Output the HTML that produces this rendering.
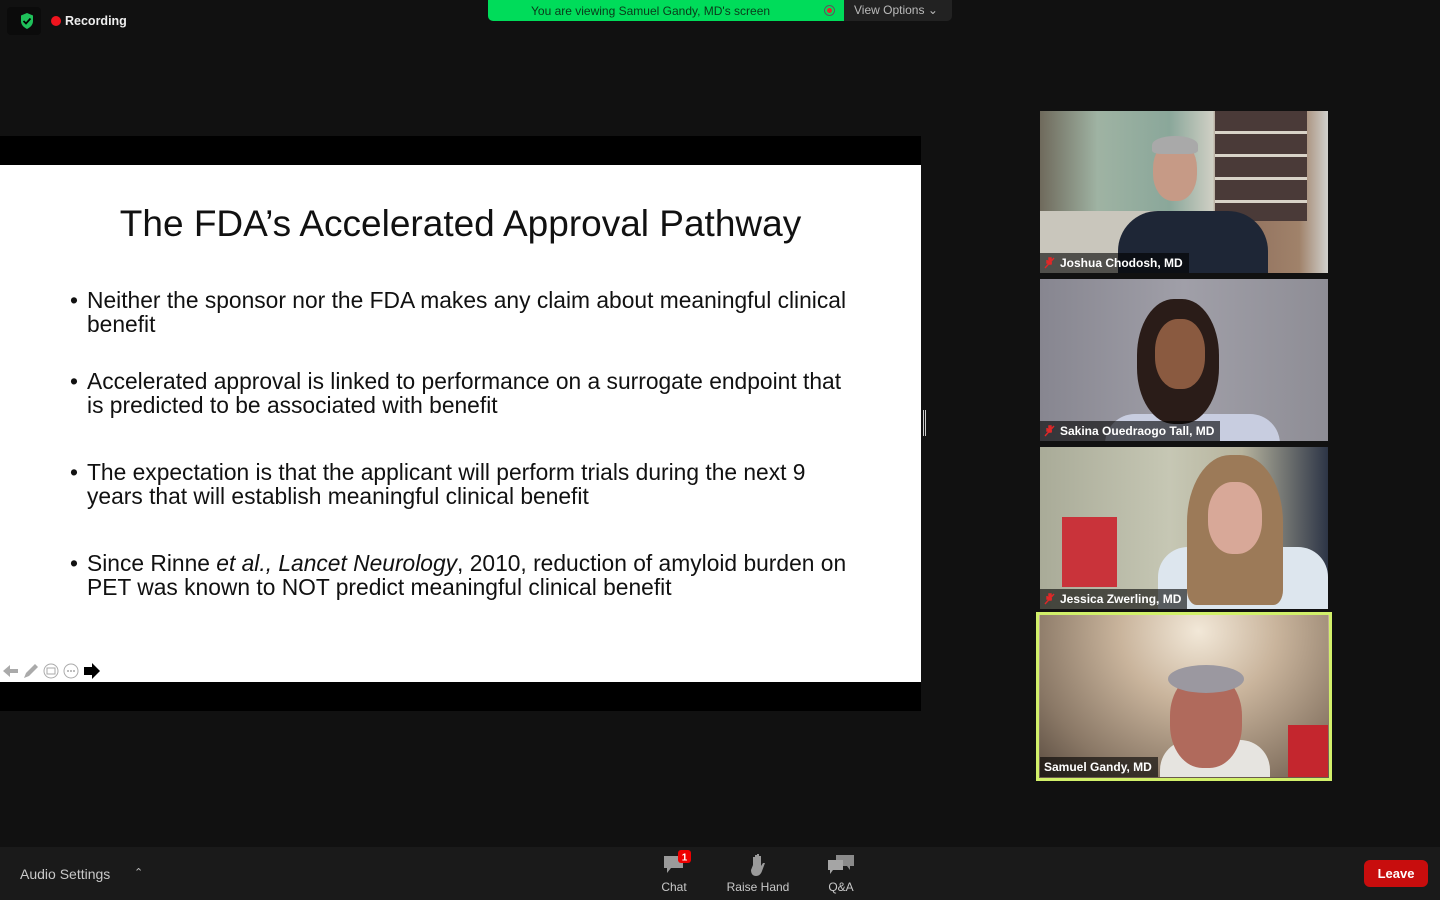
<!DOCTYPE html>
<html><head><meta charset="utf-8"><style>
*{margin:0;padding:0;box-sizing:border-box}
body{width:1440px;height:900px;background:#111;position:relative;overflow:hidden;font-family:"Liberation Sans",sans-serif}
.abs{position:absolute}
.tile{position:absolute;left:1040px;width:288px;height:162px;overflow:hidden}
.lbl{position:absolute;left:0;bottom:0;height:20px;background:rgba(0,0,0,.6);color:#fff;font-size:12px;font-weight:bold;line-height:20px;padding:0 6px 0 20px}
.mic{position:absolute;left:4px;top:4px;width:11px;height:12px}
.slide li{list-style:none;position:relative;padding-left:17px;font-size:22.8px;line-height:24px;color:#111}
.slide li:before{content:"•";position:absolute;left:0;top:0}
.tb{position:absolute;top:852px;color:#c8c8c8;font-size:12px;text-align:center}
</style></head><body>
<div class="abs" style="left:7px;top:7px;width:34px;height:28px;background:#0b0b0b;border-radius:4px"></div>
<svg class="abs" style="left:19px;top:12px" width="16" height="18" viewBox="0 0 16 18"><path d="M8 1L14 3.5V9c0 4-3 6.5-6 8-3-1.5-6-4-6-8V3.5z" fill="#1fc15a"/><path d="M4.5 9l2.5 2.5 4.5-5" stroke="#000" stroke-width="1.8" fill="none"/></svg>
<div class="abs" style="left:51px;top:16px;width:10px;height:10px;border-radius:50%;background:#f0141e"></div>
<div class="abs" style="left:65px;top:14px;color:#eee;font-size:12.5px;font-weight:bold">Recording</div>
<div class="abs" style="left:488px;top:0;width:356px;height:21px;background:#00dc5a;border-radius:0 0 0 5px"></div>
<div class="abs" style="left:531px;top:4px;color:#0a3a1a;font-size:12px">You are viewing Samuel Gandy, MD's screen</div>
<div class="abs" style="left:824px;top:5px;width:11px;height:11px;border-radius:50%;border:1px solid #5a5a5a"><div style="width:5px;height:5px;background:#e4242e;border-radius:50%;margin:2px"></div></div>
<div class="abs" style="left:844px;top:0;width:108px;height:21px;background:#222;border-radius:0 0 5px 0;color:#bbb;font-size:12px;padding:3px 0 0 10px">View Options ⌄</div>
<div class="abs" style="left:0;top:136px;width:921px;height:575px;background:#000"></div>
<div class="abs slide" style="left:0;top:165px;width:921px;height:517px;background:#fff">
<div class="abs" style="left:0;width:921px;top:38px;text-align:center;font-size:37px;color:#111">The FDA’s Accelerated Approval Pathway</div>
<ul class="abs" style="left:70px;top:123px;width:820px">
<li>Neither the sponsor nor the FDA makes any claim about meaningful clinical<br>benefit</li>
<li style="margin-top:33px">Accelerated approval is linked to performance on a surrogate endpoint that<br>is predicted to be associated with benefit</li>
<li style="margin-top:43px">The expectation is that the applicant will perform trials during the next 9<br>years that will establish meaningful clinical benefit</li>
<li style="margin-top:43px">Since Rinne <i>et al., Lancet Neurology</i>, 2010, reduction of amyloid burden on<br>PET was known to NOT predict meaningful clinical benefit</li>
</ul>
<svg class="abs" style="left:2px;top:497px" width="102" height="18" viewBox="0 0 102 18">
<path d="M1 9l7-6v4h8v4H8v4z" fill="#aaa"/>
<path d="M22 16l2-5 9-9 3 3-9 9z" fill="#aaa"/>
<circle cx="49" cy="9" r="7" fill="none" stroke="#aaa"/><rect x="45" y="6" width="8" height="6" fill="none" stroke="#aaa"/>
<circle cx="69" cy="9" r="7" fill="none" stroke="#aaa"/><circle cx="66" cy="9" r="1" fill="#aaa"/><circle cx="69" cy="9" r="1" fill="#aaa"/><circle cx="72" cy="9" r="1" fill="#aaa"/>
<path d="M82 5h8V1l8 8-8 8v-4h-8z" fill="#000"/></svg>
</div>
<div class="abs" style="left:923px;top:410px;width:3px;height:26px;border-left:1px solid #ccc;border-right:1px solid #ccc"></div>
<div class="tile" style="top:111px;background:linear-gradient(90deg,#6f6a5c 0%,#9fb3a3 20%,#8aa79a 45%,#cfcfc4 60%,#8b6a5a 62%,#a0826a 90%,#d0d0cc 100%)">
<div class="abs" style="left:0;top:100px;width:160px;height:62px;background:#c9c6bc"></div>
<div class="abs" style="left:175px;top:0;width:92px;height:110px;background:repeating-linear-gradient(180deg,#4a3a38 0 20px,#d9d3c8 20px 23px)"></div>
<div class="abs" style="left:78px;top:100px;width:150px;height:62px;background:#1e2636;border-radius:40px 40px 0 0"></div>
<div class="abs" style="left:113px;top:30px;width:44px;height:60px;background:#c69a86;border-radius:45%"></div>
<div class="abs" style="left:112px;top:25px;width:46px;height:18px;background:#a9a9a9;border-radius:50% 50% 20% 20%"></div>
<div class="lbl"><svg class="mic" viewBox="0 0 11 12"><path d="M1 11L10 1M3 3v3h5M5 1h2v6H5z" stroke="#e02828" fill="#e02828" stroke-width="1.4"/></svg>Joshua Chodosh, MD</div></div>
<div class="tile" style="top:279px;background:linear-gradient(90deg,#878690,#a09fa8 50%,#8e8d95)">
<div class="abs" style="left:65px;top:135px;width:175px;height:40px;background:#c8cde0;border-radius:30px 30px 0 0"></div>
<div class="abs" style="left:97px;top:20px;width:82px;height:125px;background:#2a1c18;border-radius:45%"></div>
<div class="abs" style="left:115px;top:40px;width:50px;height:70px;background:#8a5a40;border-radius:45%"></div>
<div class="lbl"><svg class="mic" viewBox="0 0 11 12"><path d="M1 11L10 1M3 3v3h5M5 1h2v6H5z" stroke="#e02828" fill="#e02828" stroke-width="1.4"/></svg>Sakina Ouedraogo Tall, MD</div></div>
<div class="tile" style="top:447px;background:linear-gradient(90deg,#a9ab98,#c6c7b4 45%,#b7b49e 70%,#2d3546 100%)">
<div class="abs" style="left:22px;top:70px;width:55px;height:70px;background:#c9333a"></div>
<div class="abs" style="left:118px;top:100px;width:170px;height:62px;background:#dde6ee;border-radius:30px 30px 0 0"></div>
<div class="abs" style="left:147px;top:8px;width:96px;height:150px;background:#9c7a58;border-radius:45% 45% 10% 10%"></div>
<div class="abs" style="left:168px;top:35px;width:54px;height:72px;background:#d8a898;border-radius:45%"></div>
<div class="lbl"><svg class="mic" viewBox="0 0 11 12"><path d="M1 11L10 1M3 3v3h5M5 1h2v6H5z" stroke="#e02828" fill="#e02828" stroke-width="1.4"/></svg>Jessica Zwerling, MD</div></div>
<div class="abs" style="left:1036px;top:612px;width:296px;height:169px;border:3px solid #d2f06a;background:linear-gradient(180deg,#c4b098,#9c8a74 50%,#6a5a4c)"></div>
<div class="tile" style="top:615px;background:radial-gradient(ellipse at 55% 10%,#f2e8d8 0%,#c9b49c 35%,#8a7866 75%,#5a4c40 100%)">
<div class="abs" style="left:248px;top:110px;width:40px;height:52px;background:#c4262e"></div>
<div class="abs" style="left:120px;top:125px;width:110px;height:40px;background:#e6e4e0;border-radius:30px 30px 0 0"></div>
<div class="abs" style="left:130px;top:58px;width:72px;height:95px;background:#b06a5c;border-radius:45%"></div>
<div class="abs" style="left:128px;top:50px;width:76px;height:28px;background:#9b98a0;border-radius:50%"></div>
<div class="lbl" style="padding-left:4px">Samuel Gandy, MD</div></div>
<div class="abs" style="left:0;top:847px;width:1440px;height:53px;background:#1a1a1a"></div>
<div class="abs" style="left:20px;top:866px;color:#c8c8c8;font-size:14px">Audio Settings</div>
<div class="abs" style="left:134px;top:866px;color:#bbb;font-size:11px">⌃</div>
<svg class="abs" style="left:663px;top:850px" width="30" height="26" viewBox="0 0 30 26"><path d="M1 6h19v12H8l-4 5v-5H1z" fill="#9a9a9a"/><rect x="15" y="0" width="13" height="13" rx="3" fill="#e00"/><text x="21.5" y="10.5" font-size="10" font-weight="bold" fill="#fff" text-anchor="middle" font-family="Liberation Sans">1</text></svg>
<div class="tb" style="left:653px;top:880px;width:42px">Chat</div>
<svg class="abs" style="left:749px;top:853px" width="18" height="24" viewBox="0 0 18 24"><path d="M4 12V4h2v7V2h2v9V1h2v10V3h2v10l2-3h2l-3 8c-1 3-3 5-6 5s-5-2-5-6z" fill="#9a9a9a"/></svg>
<div class="tb" style="left:720px;top:880px;width:76px">Raise Hand</div>
<svg class="abs" style="left:827px;top:854px" width="28" height="22" viewBox="0 0 28 22"><path d="M9 1h18v11h-4v4l-3-4H9z" fill="#8a8a8a"/><path d="M1 6h15v10H6l-3 4v-4H1z" fill="#a5a5a5"/></svg>
<div class="tb" style="left:820px;top:880px;width:42px">Q&amp;A</div>
<div class="abs" style="left:1364px;top:860px;width:64px;height:27px;background:#c80d0d;border-radius:6px;color:#fff;font-weight:bold;font-size:13px;text-align:center;line-height:27px">Leave</div>
</body></html>
